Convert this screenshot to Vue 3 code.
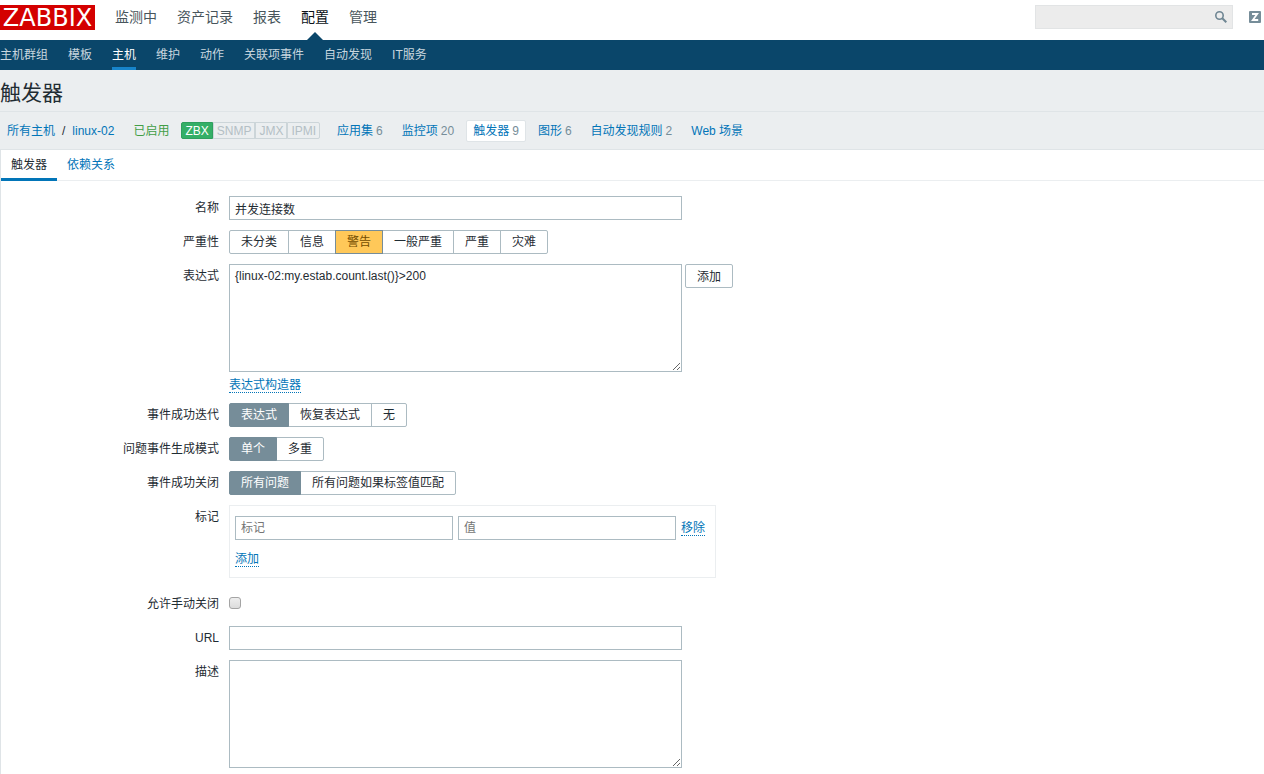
<script setup>
import { ref } from 'vue'

const mainMenu = ['监测中', '资产记录', '报表', '配置', '管理']
const subMenu = ['主机群组', '模板', '主机', '维护', '动作', '关联项事件', '自动发现', 'IT服务']
const interfaces = ['ZBX', 'SNMP', 'JMX', 'IPMI']
const hostLinks = [
  { text: '应用集', count: 6 },
  { text: '监控项', count: 20 },
  { text: '触发器', count: 9 },
  { text: '图形', count: 6 },
  { text: '自动发现规则', count: 2 },
  { text: 'Web 场景' },
]
const severities = ['未分类', '信息', '警告', '一般严重', '严重', '灾难']
const modes = [
  { key: 'recovery', label: '事件成功迭代', options: ['表达式', '恢复表达式', '无'] },
  { key: 'generation', label: '问题事件生成模式', options: ['单个', '多重'] },
  { key: 'closing', label: '事件成功关闭', options: ['所有问题', '所有问题如果标签值匹配'] },
]

const severity = ref('警告')
const selected = ref({ recovery: '表达式', generation: '单个', closing: '所有问题' })
const name = ref('并发连接数')
const expression = ref('{linux-02:my.estab.count.last()}>200')
const manualClose = ref(false)
const url = ref('')
const description = ref('')
</script>

<template>
  <div class="page">
    <header class="top">
      <a class="logo" href="#">ZABBIX</a>
      <nav class="main-menu">
        <a v-for="item in mainMenu" :key="item" href="#" :class="{ active: item === '配置' }">{{ item }}</a>
      </nav>
      <form class="search" role="search" @submit.prevent>
        <input type="text" aria-label="搜索" />
        <button type="submit" aria-label="搜索">
          <svg width="12" height="12" viewBox="0 0 12 12">
            <circle cx="4.5" cy="4.5" r="3.7" fill="none" stroke="#6f8693" stroke-width="1.6" />
            <path d="M7.3 7.3 L11.3 11.3" stroke="#6f8693" stroke-width="2" />
          </svg>
        </button>
      </form>
      <a class="share" href="#" aria-label="Share">
        <svg width="12" height="12" viewBox="0 0 12 12">
          <rect width="12" height="12" rx="1" fill="#768d99" />
          <path d="M3 3 H8.2 L3.8 9 H9.2" fill="none" stroke="#fff" stroke-width="1.8" />
        </svg>
      </a>
    </header>

    <nav class="sub-menu">
      <a v-for="item in subMenu" :key="item" href="#" :class="{ active: item === '主机' }">{{ item }}</a>
    </nav>

    <h1>触发器</h1>

    <div class="host-bar">
      <div class="crumbs">
        <a href="#">所有主机</a>
        <span>/</span>
        <a href="#">linux-02</a>
      </div>
      <span class="enabled">已启用</span>
      <div class="interfaces">
        <span v-for="item in interfaces" :key="item" :class="{ on: item === 'ZBX' }">{{ item }}</span>
      </div>
      <nav class="host-links">
        <a v-for="item in hostLinks" :key="item.text" href="#" :class="{ active: item.text === '触发器' }">{{ item.text }}<sup v-if="item.count">{{ item.count }}</sup></a>
      </nav>
    </div>

    <main class="panel">
      <nav class="tabs">
        <a href="#" class="active">触发器</a>
        <a href="#">依赖关系</a>
      </nav>

      <form class="form" @submit.prevent>
        <label class="caption" for="name">名称</label>
        <div><input id="name" v-model="name" class="field" type="text" /></div>

        <span id="severity-caption" class="caption">严重性</span>
        <div class="segments severity" role="radiogroup" aria-labelledby="severity-caption">
          <label v-for="item in severities" :key="item">
            <input v-model="severity" type="radio" name="severity" :value="item" />
            <span>{{ item }}</span>
          </label>
        </div>

        <label class="caption" for="expression">表达式</label>
        <div>
          <div class="expression">
            <textarea id="expression" v-model="expression" class="field"></textarea>
            <button type="button" class="button">添加</button>
          </div>
          <div class="constructor"><button type="button" class="link">表达式构造器</button></div>
        </div>

        <template v-for="mode in modes" :key="mode.key">
          <span :id="mode.key" class="caption">{{ mode.label }}</span>
          <div class="segments" role="radiogroup" :aria-labelledby="mode.key">
            <label v-for="item in mode.options" :key="item">
              <input v-model="selected[mode.key]" type="radio" :name="mode.key" :value="item" />
              <span>{{ item }}</span>
            </label>
          </div>
        </template>

        <span class="caption">标记</span>
        <div class="tags">
          <div class="tag-row">
            <input type="text" placeholder="标记" aria-label="标记" />
            <input type="text" placeholder="值" aria-label="值" />
            <button type="button" class="link">移除</button>
          </div>
          <button type="button" class="link">添加</button>
        </div>

        <label class="caption" for="manual-close">允许手动关闭</label>
        <div class="check"><input id="manual-close" v-model="manualClose" type="checkbox" /></div>

        <label class="caption" for="url">URL</label>
        <div><input id="url" v-model="url" class="field" type="text" /></div>

        <label class="caption" for="description">描述</label>
        <div><textarea id="description" v-model="description" class="field"></textarea></div>
      </form>
    </main>
  </div>
</template>

<style>
body {
  background: #fff;
}
</style>

<style scoped>
.page,
.page * {
  box-sizing: border-box;
}

.page {
  overflow: hidden;
  color: #1f2c33;
  font: 12px/16px 'Liberation Sans', 'Noto Sans CJK SC', sans-serif;
}

a {
  color: #0275b8;
  text-decoration: none;
}

input,
textarea,
button {
  margin: 0;
  font: inherit;
  color: inherit;
}

.top {
  display: flex;
  height: 40px;
  padding: 5px 3px 0 0;
}

.logo {
  width: 95px;
  height: 25px;
  background: #d40000;
  color: #fff;
  font: 24px/27px 'DejaVu Sans', sans-serif;
  text-align: center;
}

.main-menu {
  display: flex;
  gap: 20px;
  margin-left: 20px;
  font-size: 14px;
  line-height: 24px;
}

.main-menu a {
  position: relative;
  height: 35px;
  color: #48555c;
}

.main-menu a.active {
  color: #0a1217;
}

.main-menu a.active::after {
  content: '';
  position: absolute;
  bottom: 0;
  left: 50%;
  margin-left: -8px;
  border: 8px solid transparent;
  border-top: 0;
  border-bottom-color: #0a466a;
}

.search {
  display: flex;
  width: 198px;
  height: 24px;
  margin-left: auto;
  border: 1px solid #e2e4e5;
  background: #ececec;
}

.search input {
  flex: 1;
  min-width: 0;
  padding: 0 5px;
  border: 0;
  background: none;
}

.search button {
  display: flex;
  align-items: center;
  padding: 0 5px;
  border: 0;
  background: none;
}

.share {
  display: flex;
  align-items: center;
  height: 24px;
  margin-left: 16px;
}

.sub-menu {
  display: flex;
  gap: 20px;
  height: 30px;
  background: #0a466a;
}

.sub-menu a {
  color: #c8d6df;
  line-height: 30px;
}

.sub-menu a.active {
  border-bottom: 3px solid #1784ca;
  color: #fff;
}

h1 {
  height: 42px;
  margin: 0;
  border-bottom: 1px solid #dfe4e7;
  background: #ebeef0;
  font-size: 21px;
  font-weight: 400;
  line-height: 46px;
}

.host-bar {
  display: flex;
  align-items: center;
  height: 38px;
  padding-left: 7px;
  border-bottom: 1px solid #dfe4e7;
  background: #ebeef0;
  white-space: nowrap;
}

.crumbs {
  display: flex;
  gap: 7px;
}

.enabled {
  margin: 0 12px 0 19px;
  color: #429e47;
}

.interfaces {
  display: flex;
}

.interfaces span {
  height: 17px;
  padding: 0 3px;
  border: 1px solid #ccd5d9;
  color: #b4bfc5;
  line-height: 16px;
}

.interfaces span.on {
  border-color: #2f9f5e;
  border-radius: 2px 0 0 2px;
  background: #34af67;
  color: #fff;
}

.interfaces span:last-child {
  border-radius: 0 2px 2px 0;
}

.host-links {
  display: flex;
  gap: 5px;
  margin-left: 10px;
}

.host-links a {
  height: 22px;
  padding: 0 6px;
  border: 1px solid transparent;
  line-height: 20px;
}

.host-links a.active {
  border-color: #dfe4e7;
  border-radius: 2px;
  background: #fff;
}

.host-links sup {
  margin-left: 3px;
  color: #768d99;
  font-size: 12px;
  line-height: 16px;
  vertical-align: baseline;
}

.panel {
  border-left: 1px solid #dfe4e7;
}

.tabs {
  display: flex;
  height: 31px;
  border-bottom: 1px solid #ebeef0;
}

.tabs a {
  height: 31px;
  padding: 0 10px;
  line-height: 30px;
}

.tabs a.active {
  border-bottom: 3px solid #0275b8;
  color: #1f2c33;
}

.form {
  display: grid;
  grid-template-columns: 218px minmax(0, 1fr);
  gap: 10px;
  padding: 15px 0 6px;
}

.caption {
  line-height: 24px;
  text-align: right;
}

.field,
.tag-row input {
  display: block;
  height: 24px;
  padding: 0 5px;
  border: 1px solid #acbbc2;
  border-radius: 0;
  background: #fff;
  outline: 0;
}

.field {
  width: 453px;
}

textarea.field {
  height: 108px;
  padding: 3px 5px;
  resize: vertical;
}

.expression {
  display: flex;
  align-items: flex-start;
  gap: 3px;
}

.button {
  height: 24px;
  padding: 1px 11px 0;
  border: 1px solid #acbbc2;
  border-radius: 2px;
  background: #fff;
}

.link {
  display: block;
  height: 16px;
  padding: 0;
  border: 0;
  border-bottom: 1px dotted #0275b8;
  background: none;
  color: #0275b8;
  line-height: 17px;
}

.constructor {
  height: 21px;
  padding-top: 5px;
}

.segments {
  display: flex;
}

.segments label + label {
  margin-left: -1px;
}

.segments input {
  position: absolute;
  opacity: 0;
  pointer-events: none;
}

.segments span {
  display: block;
  height: 24px;
  padding: 0 11px;
  border: 1px solid #acbbc2;
  line-height: 22px;
}

.segments label:first-child span {
  border-radius: 2px 0 0 2px;
}

.segments label:last-child span {
  border-radius: 0 2px 2px 0;
}

.segments input:checked + span {
  position: relative;
  border-color: #768d99;
  background: #768d99;
  color: #fff;
}

.severity input:checked + span {
  background: #ffc859;
  color: #734d00;
}

.tags {
  justify-self: start;
  height: 73px;
  margin-bottom: 4px;
  padding: 10px 10px 0 5px;
  border: 1px solid #ebeef0;
}

.tag-row {
  display: flex;
  align-items: center;
  gap: 5px;
  margin-bottom: 11px;
}

.tag-row input {
  width: 218px;
}

.tag-row input::placeholder {
  color: #757575;
}

.check {
  padding-top: 5px;
}

.check input {
  display: block;
  appearance: none;
  width: 12px;
  height: 12px;
  border: 1px solid #a4a4a4;
  border-radius: 3px;
  background: linear-gradient(#eee, #dcdcdc);
}

.check input:checked {
  background: #0275b8;
}
</style>
